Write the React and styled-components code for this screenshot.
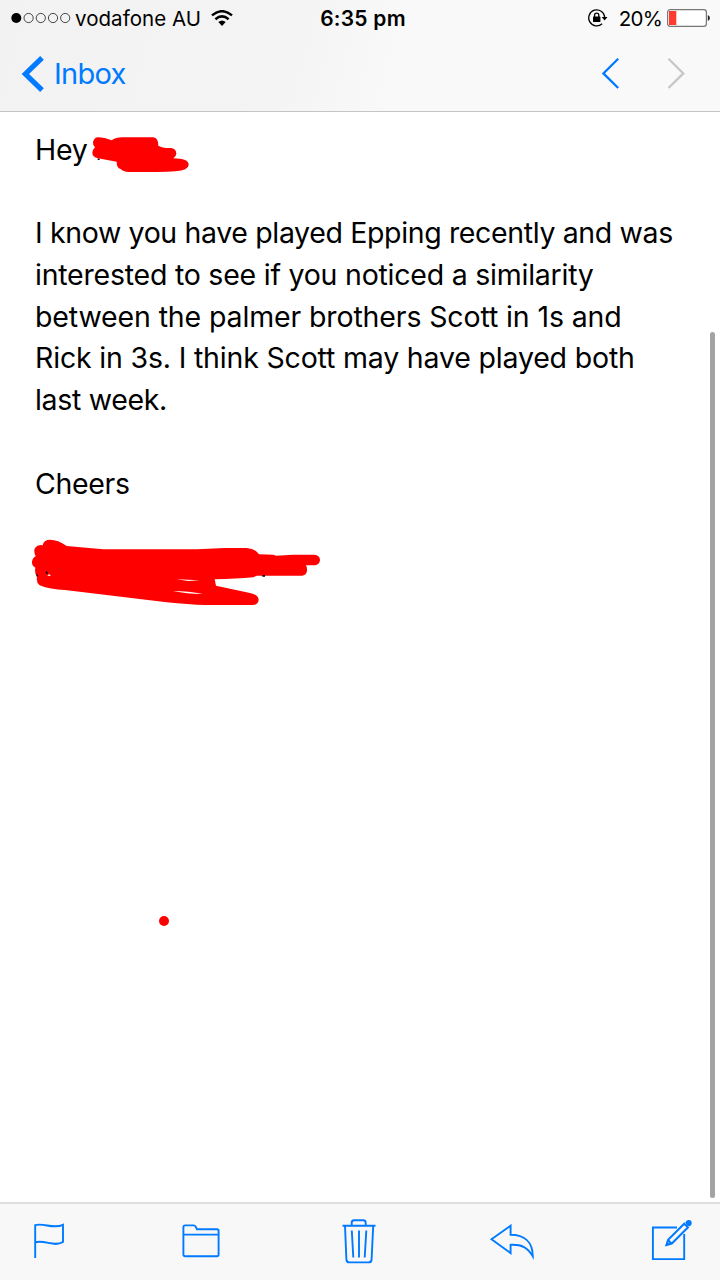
import React from 'react'
import styled, { createGlobalStyle } from 'styled-components'

const message = [
  { text: 'Hey', tracking: -0.2 },
  { text: '' },
  { text: 'I know you have played Epping recently and was', tracking: -0.36 },
  { text: 'interested to see if you noticed a similarity', tracking: -0.23 },
  { text: 'between the palmer brothers Scott in 1s and', tracking: -0.13 },
  { text: 'Rick in 3s. I think Scott may have played both', tracking: -0.18 },
  { text: 'last week.', tracking: -0.32 },
  { text: '' },
  { text: 'Cheers', tracking: -0.35 },
]

const App = () => {
  return (
    <>
      <GlobalStyle />
      <Screen>
        <Header>
          <StatusBar>
            <Carrier>
              <Signal />
              <CarrierName>vodafone AU</CarrierName>
              <Wifi />
            </Carrier>
            <Clock>6:35 pm</Clock>
            <Power>
              <RotationLock />
              <Percent>20%</Percent>
              <Battery />
            </Power>
          </StatusBar>
          <NavBar>
            <BackButton>
              <svg width="24" height="38" viewBox="0 0 24 38" fill="none" stroke="currentColor" strokeWidth="5.2">
                <path d="M21 2.8L4.4 19 21 35.2" />
              </svg>
              <BackLabel>Inbox</BackLabel>
            </BackButton>
            <Pager>
              <PagerButton>
                <svg width="20" height="32" viewBox="0 0 20 32" fill="none" stroke="currentColor" strokeWidth="2.3">
                  <path d="M18.2 .8L3.4 15.4l14.8 14.6" />
                </svg>
              </PagerButton>
              <PagerButton $disabled>
                <svg width="20" height="32" viewBox="0 0 20 32" fill="none" stroke="currentColor" strokeWidth="2.3">
                  <path d="M2.5 .8l14.8 14.6L2.5 30" />
                </svg>
              </PagerButton>
            </Pager>
          </NavBar>
        </Header>

        <Message>
          {message.map((line, i) => (
            <Line key={i} $tracking={line.tracking}>{line.text}</Line>
          ))}
          <NameScribble />
          <SignatureScribble />
          <Dot />
          <Scrollbar />
        </Message>

        <Toolbar>
          <ToolButton><Flag /></ToolButton>
          <ToolButton><Folder /></ToolButton>
          <ToolButton><Trash /></ToolButton>
          <ToolButton><Reply /></ToolButton>
          <ToolButton><Compose /></ToolButton>
        </Toolbar>
      </Screen>
    </>
  )
}

export default App

const Signal = () => (
  <svg width="60" height="12" viewBox="0 0 60 12" fill="none" stroke="#333" strokeWidth="0.9">
    <circle cx="5.3" cy="6" r="5" fill="#000" stroke="none" />
    <circle cx="17.6" cy="6" r="4.6" />
    <circle cx="29.8" cy="6" r="4.6" />
    <circle cx="42" cy="6" r="4.6" />
    <circle cx="54.2" cy="6" r="4.6" />
  </svg>
)

const Wifi = () => (
  <svg width="22" height="17" viewBox="0 0 22 17" fill="none" stroke="#000" strokeWidth="2.5">
    <path d="M1 5.4Q11-3 21 5.4" />
    <path d="M4.4 9.2q6.6-5.6 13.2 0" />
    <path d="M7.3 12.1q3.7-3.2 7.4 0L11 16z" fill="#000" stroke="none" />
  </svg>
)

const RotationLock = () => (
  <svg width="20" height="18" viewBox="0 0 20 18" fill="none" stroke="#000" strokeWidth="1.3">
    <path d="M14.1 14.8A8 8 0 1 1 16.7 8.2" />
    <path d="M13.7 8h5.8l-2.9 3.5z" fill="#000" stroke="none" />
    <rect x="5" y="7.4" width="7.4" height="5.6" rx=".6" fill="#000" stroke="none" />
    <path d="M6.6 8V6.3a2.1 2.1 0 0 1 4.2 0V8" />
  </svg>
)

const Battery = () => (
  <svg width="43" height="18" viewBox="0 0 43 18" fill="none">
    <rect x=".6" y=".6" width="38.8" height="16.8" rx="2.6" fill="#fff" stroke="#777" strokeWidth="1.2" />
    <path d="M2 2h7.3v14H2z" fill="#ff3b30" />
    <path d="M40.8 6q2.1.8 2.1 3t-2.1 3z" fill="#222" />
  </svg>
)

const Flag = () => (
  <Icon width="32" height="36" viewBox="0 0 32 36">
    <path d="M1.2 35V2.1C10-.5 19 6.5 29 1.8V19c-9 5.3-17-2.2-27.8.2" />
  </Icon>
)

const Folder = () => (
  <Icon width="38" height="34" viewBox="0 0 38 34">
    <path d="M1.4 30.5V3q0-1.6 1.8-1.6h8.4q1.5 0 2.2 1.5l1.1 2.3H35q1.6 0 1.6 1.7v23.6q0 1.7-1.7 1.7H3.2q-1.8 0-1.8-1.7zM1.4 10.6h35.2" />
  </Icon>
)

const Trash = () => (
  <Icon width="34" height="46" viewBox="0 0 34 46">
    <path d="M.5 7.8h33M9.7 7.5V4.7q0-2.5 2.5-2.5h9q2.5 0 2.5 2.5v2.8M3 8l1.4 33.4q.1 3 3 3h19.2q2.9 0 3-3L31.2 8M9.8 12.5l1.5 27M17 12.5v27M24.3 12.5l-1.6 27" />
  </Icon>
)

const Reply = () => (
  <Icon width="44" height="34" viewBox="0 0 44 34">
    <path d="M1.5 15.3L20.6 1.7v9.1c13.5 0 22.2 7 22.2 21.6-5-9-11-12.1-22.2-11.6v8.3z" />
  </Icon>
)

const Compose = () => (
  <Icon width="44" height="42" viewBox="0 0 44 42">
    <path d="M27 7.5H2.9v31.6h31.3V14" />
    <path d="M16.4 25l1.7-5.2L34.2 3.7l3.7 3.7L21.8 23.5zM18 20l3.7 3.7" strokeWidth="2" />
    <circle cx="38.8" cy="3" r="2.9" fill="currentColor" stroke="none" />
    <path d="M35.2 2.6l1.4-1.3 4 4-1.4 1.3zM15.8 25.6l1.5-4.2 2.8 2.8z" fill="currentColor" stroke="none" />
  </Icon>
)

const NameScribble = () => (
  <Scribble $left={20} $top={8} width="200" height="60" viewBox="0 0 600 180">
    <path d="M232 52Q251 51 275 61Q286 52 307 52H400Q415 54 415 77Q428 85 452 84Q469 86 469 101Q468 110 460 115Q506 115 506 135Q505 151 467 154Q432 157 390 156H326Q309 155 302 147Q290 144 290 125L234 115Q217 111 217 98Q218 89 225 82Q218 75 219 66Q222 54 232 52Z" fill="#f00" />
    <path d="M233 115l6 1v4h-6z" fill="#400" />
  </Scribble>
)

const SignatureScribble = () => (
  <Scribble $left={20} $top={418} width="310" height="85" viewBox="0 0 930 255">
    <path d="M68 46Q70 29 91 29Q113 29 140 48L250 58H530L615 54H680Q705 55 717 73L760 74L768 77L820 74H883Q900 76 900 90Q899 103 886 106H858Q862 113 861 123Q858 137 846 137H710L700 142Q650 147 584 148L588 167L690 189Q716 194 716 210Q714 225 697 225H555Q505 224 440 217L135 180Q90 179 59 166Q48 158 51 142Q43 130 46 113Q35 107 36 96Q37 84 47 79Q40 65 45 54Q53 43 68 46Z" fill="#f00" />
    <path d="M470 148l68 3-33 2zM458 183q50 0 90 9-38 1-90-9zM82 137l5-5 6 6z" fill="#fff" />
    <path d="M78 122l5 5v6l-6-3zM50 132l4 2v5h-4zM727 135h8v5h-8z" fill="#100" />
  </Scribble>
)

const GlobalStyle = createGlobalStyle`
  * {
    box-sizing: border-box;
  }
  body {
    margin: 0;
    font-family: Inter, "Liberation Sans", sans-serif;
    color: #000;
    background: #fff;
  }
`

const Screen = styled.div`
  display: flex;
  flex-direction: column;
  width: 720px;
  height: 1280px;
  overflow: hidden;
`

const Header = styled.header`
  flex: none;
  height: 112px;
  background: linear-gradient(105deg, #f2f2f3 0%, #f4f4f4 40%, #f9f9f9 56%, #f9f9f9 100%);
  border-bottom: 1px solid #c4c4c6;
`

const StatusBar = styled.div`
  display: grid;
  grid-template-columns: 1fr auto 1fr;
  align-items: center;
  height: 36px;
  padding: 0 10px 0 11px;
  white-space: nowrap;
`

const Carrier = styled.div`
  display: flex;
  align-items: center;
`

const CarrierName = styled.span`
  margin: 1px 10px 0 4px;
  font-size: 20.5px;
  letter-spacing: 0.05px;
`

const Clock = styled.span`
  margin-top: 1px;
  padding-left: 5px;
  font-size: 21px;
  font-weight: 600;
  letter-spacing: 0.25px;
`

const Power = styled.div`
  display: flex;
  align-items: center;
  justify-content: flex-end;
`

const Percent = styled.span`
  margin: 1px 5px 0 11px;
  font-size: 20.5px;
  letter-spacing: -0.8px;
`

const NavBar = styled.nav`
  display: flex;
  align-items: center;
  justify-content: space-between;
  height: 75px;
  padding: 0 34px 0 21px;
`

const BackButton = styled.div`
  display: flex;
  align-items: center;
  color: #007aff;
`

const BackLabel = styled.span`
  margin-left: 9px;
  font-size: 29px;
  letter-spacing: -0.75px;
`

const Pager = styled.div`
  display: flex;
  gap: 46px;
`

const PagerButton = styled.div`
  display: flex;
  color: ${props => props.$disabled ? '#c7c7c9' : '#007aff'};
`

const Message = styled.main`
  position: relative;
  flex: 1;
  padding: 17px 36px 0 35px;
`

const Line = styled.div`
  height: 41.7px;
  font-size: 28.5px;
  line-height: 41.7px;
  letter-spacing: ${props => props.$tracking || 0}px;
  white-space: pre;
`

const Scribble = styled.svg`
  position: absolute;
  left: ${props => props.$left}px;
  top: ${props => props.$top}px;
`

const Dot = styled.div`
  position: absolute;
  left: 159px;
  top: 804px;
  width: 10px;
  height: 10px;
  border-radius: 50%;
  background: #f00;
`

const Scrollbar = styled.div`
  position: absolute;
  right: 5px;
  top: 220px;
  bottom: 4px;
  width: 5px;
  border-radius: 3px;
  background: #a3a3a3;
`

const Toolbar = styled.footer`
  display: grid;
  flex: none;
  grid-template-columns: 148px 160px 148px 160px auto;
  align-items: center;
  height: 78px;
  padding: 0 0 2px 34px;
  background: #f8f8f9;
  border-top: 2px solid #dfdfe1;
`

const ToolButton = styled.div`
  display: flex;
  color: #007aff;
`

const Icon = styled.svg`
  fill: none;
  stroke: currentColor;
  stroke-width: 1.9px;
  overflow: visible;
`
